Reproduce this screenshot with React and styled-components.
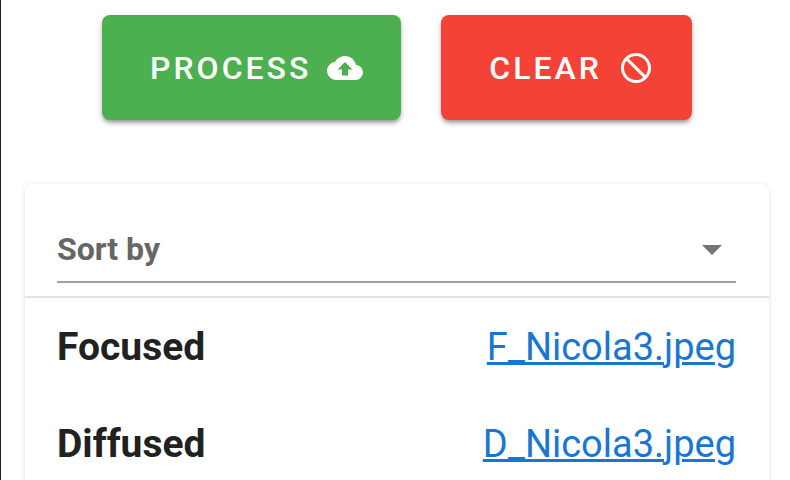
import React from "react";
import styled, { createGlobalStyle } from "styled-components";

const GlobalStyle = createGlobalStyle`
  *, *::before, *::after { box-sizing: border-box; }
  html, body { margin: 0; background: #ffffff; }
  body { font-family: Roboto, "Liberation Sans", sans-serif; color: #212121; overflow: hidden; }
`;

const Page = styled.main`
  display: flex;
  flex-direction: column;
  gap: 64px;
  min-height: 100vh;
  padding: 15px 21px 0 24px;
  border-left: 1px solid #222222;
`;

const Actions = styled.div`
  display: flex;
  justify-content: center;
  gap: 40px;
`;

const ActionButton = styled.button`
  display: inline-flex;
  align-items: center;
  gap: 16px;
  height: 105px;
  padding: 0 38px 0 48px;
  border: 0;
  border-radius: 8px;
  background: ${({ $color }) => $color};
  box-shadow: 0 4px 4px -2px rgba(0, 0, 0, 0.28), 0 3px 5px rgba(0, 0, 0, 0.16),
    0 2px 10px rgba(0, 0, 0, 0.08);
  color: #ffffff;
  font: 500 32px/40px Roboto, "Liberation Sans", sans-serif;
  letter-spacing: 3px;
  text-transform: uppercase;
  cursor: pointer;
`;

const Icon = styled.svg`
  flex: none;
  width: 36px;
  height: 36px;
  fill: currentColor;
`;

const Card = styled.section`
  flex: 1;
  border-radius: 8px;
  background: #ffffff;
  box-shadow: 0 4px 4px -2px rgba(0, 0, 0, 0.12), 0 1px 5px rgba(0, 0, 0, 0.12);
`;

const SortBar = styled.div`
  padding: 32px 33px 13px 32px;
  border-bottom: 2px solid #e4e4e4;
`;

const SelectField = styled.div`
  display: grid;
  align-items: center;
  border-bottom: 2px solid #a0a0a0;
`;

const Select = styled.select`
  grid-area: 1 / 1;
  width: 100%;
  height: 65px;
  padding: 0 48px 0 0;
  border: 0;
  background: transparent;
  color: #666666;
  font: 700 32px/40px Roboto, "Liberation Sans", sans-serif;
  appearance: none;
  cursor: pointer;
`;

const Arrow = styled.svg`
  grid-area: 1 / 1;
  justify-self: end;
  width: 48px;
  height: 48px;
  fill: #757575;
  pointer-events: none;
`;

const FileList = styled.dl`
  margin: 0;
`;

const FileRow = styled.div`
  display: flex;
  align-items: center;
  justify-content: space-between;
  height: 97px;
  padding: 0 33px 0 32px;
  line-height: 48px;
`;

const FileKind = styled.dt`
  font-size: 39px;
  font-weight: 700;
`;

const FileValue = styled.dd`
  margin: 0;
  font-size: 38px;
`;

const FileLink = styled.a`
  color: #1976d2;
  text-decoration: underline;
  text-decoration-thickness: 3px;
`;

const files = [
  { kind: "Focused", name: "F_Nicola3.jpeg" },
  { kind: "Diffused", name: "D_Nicola3.jpeg" },
];

export default function App() {
  return (
    <>
      <GlobalStyle />
      <Page>
        <Actions>
          <ActionButton type="button" $color="#4caf50">
            Process
            <Icon viewBox="0 0 24 24" aria-hidden="true">
              <path d="M14,13V17H10V13H7L12,8L17,13M19.35,10.03C18.67,6.59 15.64,4 12,4C9.11,4 6.6,5.64 5.35,8.03C2.34,8.36 0,10.9 0,14A6,6 0 0,0 6,20H19A5,5 0 0,0 24,15C24,12.36 21.95,10.22 19.35,10.03Z" />
            </Icon>
          </ActionButton>
          <ActionButton type="button" $color="#f44336">
            Clear
            <Icon viewBox="0 0 24 24" aria-hidden="true">
              <path d="M12 2C17.5 2 22 6.5 22 12S17.5 22 12 22 2 17.5 2 12 6.5 2 12 2M12 4C10.1 4 8.4 4.6 7.1 5.7L18.3 16.9C19.3 15.5 20 13.8 20 12C20 7.6 16.4 4 12 4M16.9 18.3L5.7 7.1C4.6 8.4 4 10.1 4 12C4 16.4 7.6 20 12 20C13.9 20 15.6 19.4 16.9 18.3Z" />
            </Icon>
          </ActionButton>
        </Actions>
        <Card>
          <SortBar>
            <SelectField>
              <Select aria-label="Sort by" defaultValue="">
                <option value="">Sort by</option>
              </Select>
              <Arrow viewBox="0 0 24 24" aria-hidden="true">
                <path d="M7 10l5 5 5-5z" />
              </Arrow>
            </SelectField>
          </SortBar>
          <FileList>
            {files.map(({ kind, name }) => (
              <FileRow key={name}>
                <FileKind>{kind}</FileKind>
                <FileValue>
                  <FileLink href={`#${name}`}>{name}</FileLink>
                </FileValue>
              </FileRow>
            ))}
          </FileList>
        </Card>
      </Page>
    </>
  );
}
